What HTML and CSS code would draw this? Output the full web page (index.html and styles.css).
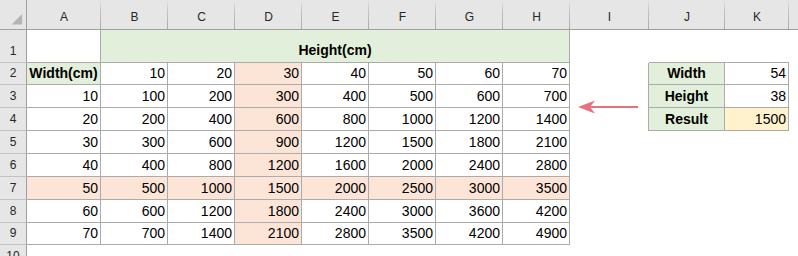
FILE: index.html
```html
<!DOCTYPE html>
<html>
<head>
<meta charset="utf-8">
<link rel="stylesheet" href="styles.css">
</head>
<body>
<div class="sheet">
  <!-- column headings -->
  <div class="ch corner">
    <svg class="corner-tri" width="27" height="30" viewBox="0 0 27 30"><polygon points="12,26 23,26 23,15" fill="#b4b4b4"/></svg>
  </div>
  <div class="ch">A</div><div class="ch">B</div><div class="ch">C</div><div class="ch">D</div>
  <div class="ch">E</div><div class="ch">F</div><div class="ch">G</div><div class="ch">H</div>
  <div class="ch">I</div><div class="ch">J</div><div class="ch">K</div><div class="ch last"></div>

  <!-- row 1 -->
  <div class="rh">1</div>
  <div class="c"></div>
  <div class="c g b merged">Height(cm)</div>
  <div class="e"></div><div class="e bb"></div><div class="e bb"></div><div class="e"></div>

  <!-- row 2 -->
  <div class="rh">2</div>
  <div class="c g b">Width(cm)</div>
  <div class="c">10</div><div class="c">20</div><div class="c p">30</div><div class="c">40</div>
  <div class="c">50</div><div class="c">60</div><div class="c">70</div>
  <div class="e br"></div><div class="c g b">Width</div><div class="c">54</div><div class="e"></div>

  <!-- row 3 -->
  <div class="rh">3</div>
  <div class="c">10</div>
  <div class="c">100</div><div class="c">200</div><div class="c p">300</div><div class="c">400</div>
  <div class="c">500</div><div class="c">600</div><div class="c">700</div>
  <div class="e br"></div><div class="c g b">Height</div><div class="c">38</div><div class="e"></div>

  <!-- row 4 -->
  <div class="rh">4</div>
  <div class="c">20</div>
  <div class="c">200</div><div class="c">400</div><div class="c p">600</div><div class="c">800</div>
  <div class="c">1000</div><div class="c">1200</div><div class="c">1400</div>
  <div class="e br"></div><div class="c g b">Result</div><div class="c y">1500</div><div class="e"></div>

  <!-- row 5 -->
  <div class="rh">5</div>
  <div class="c">30</div>
  <div class="c">300</div><div class="c">600</div><div class="c p">900</div><div class="c">1200</div>
  <div class="c">1500</div><div class="c">1800</div><div class="c">2100</div>
  <div class="e"></div><div class="e"></div><div class="e"></div><div class="e"></div>

  <!-- row 6 -->
  <div class="rh">6</div>
  <div class="c">40</div>
  <div class="c">400</div><div class="c">800</div><div class="c p">1200</div><div class="c">1600</div>
  <div class="c">2000</div><div class="c">2400</div><div class="c">2800</div>
  <div class="e"></div><div class="e"></div><div class="e"></div><div class="e"></div>

  <!-- row 7 -->
  <div class="rh">7</div>
  <div class="c p">50</div>
  <div class="c p">500</div><div class="c p">1000</div><div class="c p">1500</div><div class="c p">2000</div>
  <div class="c p">2500</div><div class="c p">3000</div><div class="c p">3500</div>
  <div class="e"></div><div class="e"></div><div class="e"></div><div class="e"></div>

  <!-- row 8 -->
  <div class="rh">8</div>
  <div class="c">60</div>
  <div class="c">600</div><div class="c">1200</div><div class="c p">1800</div><div class="c">2400</div>
  <div class="c">3000</div><div class="c">3600</div><div class="c">4200</div>
  <div class="e"></div><div class="e"></div><div class="e"></div><div class="e"></div>

  <!-- row 9 -->
  <div class="rh">9</div>
  <div class="c">70</div>
  <div class="c">700</div><div class="c">1400</div><div class="c p">2100</div><div class="c">2800</div>
  <div class="c">3500</div><div class="c">4200</div><div class="c">4900</div>
  <div class="e"></div><div class="e"></div><div class="e"></div><div class="e"></div>

  <!-- row 10 -->
  <div class="rh">10</div>
  <div class="e wide"></div>

  <!-- arrow shape pointing from the lookup box to the table -->
  <svg class="arrow" width="70" height="24" viewBox="0 0 70 24">
    <line x1="14" y1="11" x2="63" y2="11" stroke="#e8707f" stroke-width="2"/>
    <polygon points="3,11 20,4.5 15,11 20,17.5" fill="#e8707f"/>
  </svg>
</div>
</body>
</html>
```

FILE: styles.css
```css
html, body {
  margin: 0;
  padding: 0;
  background: #ffffff;
  overflow: hidden;
}

.sheet {
  position: relative;
  display: grid;
  grid-template-columns: 27px 74px 67px 67px 67px 67px 67px 67px 67px 79px 76px 64px 1fr;
  grid-template-rows: 30px 33px 22px 23px 23px 23px 23px 23px 23px 22px 23px;
  width: 798px;
  font-family: "Liberation Sans", Arial, sans-serif;
  font-size: 14px;
  color: #000;
}

.sheet > div {
  box-sizing: border-box;
  line-height: 16px;
  white-space: nowrap;
  overflow: hidden;
}

/* column headings */
.ch {
  display: flex;
  justify-content: center;
  align-items: flex-end;
  padding-bottom: 4px;
  font-size: 12px;
  color: #262626;
  border-bottom: 1px solid #9f9f9f;
  background: linear-gradient(to bottom, #e6e6e6 0%, #c4c4c4 35%, #ababab 100%) right top / 1px 100% no-repeat, #e6e6e6;
}

.ch.corner {
  position: relative;
  padding: 0;
  border-right: 1px solid #9f9f9f;
  background: #e6e6e6;
}

.corner-tri {
  display: block;
}

.ch.last {
  background: #e6e6e6;
}

/* row headings */
.rh {
  display: flex;
  justify-content: center;
  align-items: flex-end;
  padding-bottom: 3px;
  font-size: 12px;
  color: #262626;
  background: #e6e6e6;
  border-right: 1px solid #9f9f9f;
  border-bottom: 1px solid #c2c2c2;
}

/* bordered data cells */
.c {
  display: flex;
  justify-content: flex-end;
  align-items: flex-end;
  padding: 0 2px 3px 0;
  border-right: 1px solid #ababab;
  border-bottom: 1px solid #ababab;
  background: #ffffff;
}

.c.b {
  justify-content: center;
  padding-right: 0;
  font-weight: bold;
}

.merged {
  grid-column: span 7;
  padding-bottom: 4px;
}

.g { background: #e2efda; }
.p { background: #fce4d6; }
.y { background: #fff2cc; }

/* plain cells with no gridlines */
.e { background: #ffffff; }
.e.bb { border-bottom: 1px solid #ababab; }
.e.br { border-right: 1px solid #ababab; }
.e.wide { grid-column: span 12; }

.arrow {
  position: absolute;
  left: 575px;
  top: 96px;
}
```
